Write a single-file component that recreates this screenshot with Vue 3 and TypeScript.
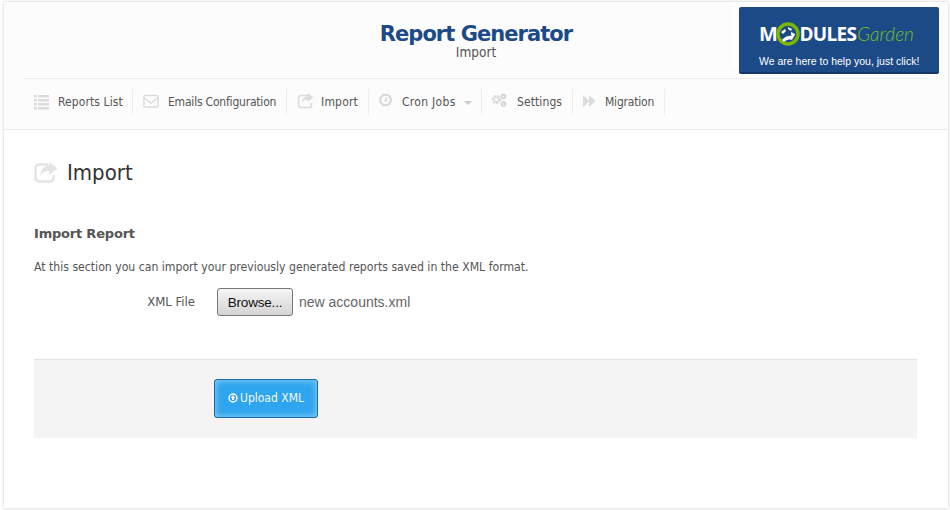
<script setup lang="ts">
const tabs = [
  { label: 'Reports List', icon: 'list', w: 109, gap: 6, ls: 0.1 },
  { label: 'Emails Configuration', icon: 'mail', w: 154, gap: 7, ls: -0.2 },
  { label: 'Import', icon: 'share', w: 82, gap: 6, ls: 0.2 },
  { label: 'Cron Jobs', icon: 'clock', w: 113, gap: 5, ls: 0.3, caret: true },
  { label: 'Settings', icon: 'cogs', w: 91, gap: 7, ls: 0.1 },
  { label: 'Migration', icon: 'forward', w: 92, gap: 4, ls: -0.2 },
]
</script>

<template>
  <div class="frame">
    <header class="head">
      <div class="titles">
        <h1>Report Generator</h1>
        <p>Import</p>
      </div>
      <a class="logo">
        <div class="brand">
          <span class="m">M</span>
          <svg class="ring" width="26" height="26" viewBox="0 0 26 26">
            <circle cx="13" cy="13" r="10" fill="#1c4a87" stroke="#7ab800" stroke-width="3.4" />
            <path d="M6 11l4-3 1 2-3 3zM13 6l4 2-1 2-3-2zM16 11l4 2-1 3-3-2zM7 19c3-4 7-5 12-4l-2 4c-3-1-6 0-8 2z" fill="#fff" />
          </svg>
          <span class="m dules">DULES</span>
          <span class="g">Garden</span>
        </div>
        <div class="tag">We are here to help you, just click!</div>
      </a>
      <nav class="nav">
        <a v-for="t in tabs" :key="t.label" class="tab" :style="{ width: t.w + 'px', letterSpacing: t.ls + 'px' }">
          <svg class="ico" width="18" height="18" viewBox="0 0 18 18">
            <g v-if="t.icon === 'list'" fill="#dcdcdc">
              <path d="M0 2h3v2.400H0zM0 6h3v2.400H0zM0 10h3v2.400H0zM0 14h3v2.400H0zM4 2h11v2.400H4zM4 6h11v2.400H4zM4 10h11v2.400H4zM4 14h11v2.400H4z" />
            </g>
            <g v-else-if="t.icon === 'mail'" fill="none" stroke="#dcdcdc" stroke-width="1.500">
              <rect x="1" y="2.500" width="14" height="11.500" rx="1" />
              <path d="M1.500 5l6.500 5 6.500-5" />
            </g>
            <g v-else-if="t.icon === 'share'">
              <path d="M11 2.500H4A2.500 2.500 0 0 0 1.500 5v7A2.500 2.500 0 0 0 4 14.500h8A2.500 2.500 0 0 0 14.500 12v-2" fill="none" stroke="#dcdcdc" stroke-width="1.700" />
              <path d="M10.500 0l6 4.500-6 4.500V6.500C8 6.500 6 7.500 5 10c0-4 2-6.500 5.500-6.800z" fill="#dcdcdc" />
            </g>
            <g v-else-if="t.icon === 'clock'">
              <circle cx="6.500" cy="7" r="5.300" fill="none" stroke="#d8d8d8" stroke-width="2.200" />
              <path d="M6.500 4h1.400v4.300H4.500V7h2z" fill="#d8d8d8" />
            </g>
            <g v-else-if="t.icon === 'cogs'" fill="none" stroke="#d8d8d8">
              <circle cx="4.500" cy="6.500" r="3" stroke-width="3" stroke-dasharray="2.200 .7" />
              <circle cx="11.500" cy="3.500" r="1.800" stroke-width="2.200" />
              <circle cx="11.500" cy="11" r="1.800" stroke-width="2.200" />
            </g>
            <path v-else d="M0 2l6 5.500V2l6.500 6-6.500 6V8.500L0 14z" fill="#dcdcdc" />
          </svg>
          <span class="lbl" :style="{ marginLeft: t.gap + 'px' }">{{ t.label }}</span>
          <i v-if="t.caret" class="caret"></i>
        </a>
      </nav>
    </header>

    <main class="body">
      <h2 class="page">
        <svg width="24" height="22" viewBox="0 0 24 22">
          <path d="M14 3.500H5A3.500 3.500 0 0 0 1.500 7v10A3.500 3.500 0 0 0 5 20.500h11a3.500 3.500 0 0 0 3.500-3.500v-3" fill="none" stroke="#e4e4e4" stroke-width="2.400" />
          <path d="M15 1l8.500 6.500L15 14v-4c-4 0-7 1.500-8.500 5 0-6 3-10 8.500-10.500z" fill="#e4e4e4" />
        </svg>
        <span>Import</span>
      </h2>
      <h3>Import Report</h3>
      <p class="desc">At this section you can import your previously generated reports saved in the XML format.</p>
      <div class="row">
        <label>XML File</label>
        <button class="browse" type="button">Browse...</button>
        <span class="file">new accounts.xml</span>
      </div>
      <div class="actions">
        <button class="upload" type="button">
          <svg width="10" height="10" viewBox="0 0 11 11">
            <circle cx="5.500" cy="5.500" r="4.300" fill="none" stroke="#fff" stroke-width="1.600" />
            <path d="M5.500 2.600L8 5.600H6.600V7.800H4.400V5.600H3z" fill="#fff" />
          </svg>
          Upload XML
        </button>
      </div>
    </main>
  </div>
</template>

<style scoped>
.frame {
  margin: 2px 2px 2px 4px;
  height: 506px;
  background: #fff;
  box-shadow: 0 0 3px rgba(0, 0, 0, 0.22);
  font-family: "DejaVu Sans", sans-serif;
  font-stretch: condensed;
  color: #555;
  overflow: hidden;
}
.head {
  position: relative;
  height: 128px;
  box-sizing: border-box;
  background: #fcfcfc;
  border-bottom: 1px solid #ececec;
  display: flex;
  flex-direction: column;
}
.titles {
  height: 76px;
  box-sizing: border-box;
  padding-top: 21px;
  text-align: center;
}
.titles h1 {
  margin: 0;
  font: bold 21px/22px "DejaVu Sans", sans-serif;
  font-stretch: normal;
  letter-spacing: -0.95px;
  color: #1c4a87;
}
.titles p {
  margin: 1px 0 0;
  font-size: 13.500px;
  line-height: 12px;
  color: #555;
}
.logo {
  position: absolute;
  left: 735px;
  top: 5px;
  width: 200px;
  height: 67px;
  box-sizing: border-box;
  background: #1c4a87;
  border-bottom: 2px solid #143763;
  border-radius: 2px;
  box-shadow: -7px -5px 0 #fff;
  color: #fff;
}
.brand {
  display: flex;
  align-items: center;
  height: 26px;
  margin: 14px 0 0 20px;
}
.m {
  font: bold 20px/26px "Open Sans", sans-serif;
  letter-spacing: -0.4px;
  color: #fff;
}
.dules {
  font-size: 19px;
  letter-spacing: -0.7px;
}
.ring {
  margin: 0 -2px 0 -2px;
  flex: none;
}
.g {
  margin-left: 1px;
  font: 300 italic 19px/26px "Lato", sans-serif;
  color: #74c01c;
}
.tag {
  margin: 8px 0 0 20px;
  font: 10.500px/13px "Liberation Sans", sans-serif;
  white-space: nowrap;
}
.nav {
  margin: 0 20px;
  height: 51px;
  border-top: 1px solid #ececec;
  display: flex;
  padding-top: 10px;
  box-sizing: border-box;
}
.tab {
  height: 26px;
  box-sizing: border-box;
  border-right: 1px solid #ececec;
  display: flex;
  align-items: center;
  font-size: 12px;
  color: #555;
  white-space: nowrap;
  padding-bottom: 1px;
}
.ico {
  margin-left: 10px;
  flex: none;
}
.caret {
  margin-left: 8px;
  margin-top: 2px;
  border-left: 4px solid transparent;
  border-right: 4px solid transparent;
  border-top: 4px solid #ccc;
}
.body {
  padding: 0 31px 0 30px;
}
.page {
  margin: 0;
  padding-top: 14px;
  height: 56px;
  display: flex;
  align-items: center;
  gap: 9px;
  font-size: 22px;
  font-weight: 400;
  color: #333;
  box-sizing: content-box;
}
.page svg {
  flex: none;
}
h3 {
  margin: 0;
  padding-top: 24px;
  font: bold 13px/20px "DejaVu Sans", sans-serif;
  letter-spacing: -0.2px;
  color: #555;
}
.desc {
  margin: 15px 0 0;
  font-size: 12.150px;
  line-height: 18px;
  position: relative;
  top: -1px;
}
.row {
  margin-top: 11px;
  display: flex;
  align-items: center;
  height: 28px;
}
.row label {
  width: 161px;
  text-align: right;
  font-size: 13px;
  margin-top: -2px;
}
.browse {
  margin-left: 22px;
  width: 76px;
  height: 28px;
  padding: 0;
  border: 1px solid #777;
  border-radius: 3px;
  background: linear-gradient(#f5f5f5, #d4d4d4);
  font: 13.500px "Liberation Sans", sans-serif;
  letter-spacing: -0.2px;
  color: #111;
}
.file {
  margin-left: 6px;
  font: 14px "Liberation Sans", sans-serif;
  color: #666;
}
.actions {
  margin-top: 43px;
  height: 79px;
  box-sizing: border-box;
  background: #f4f4f4;
  border-top: 1px solid #e3e3e3;
  padding: 19px 0 0 180px;
}
.upload {
  width: 104px;
  height: 39px;
  padding: 0 0 1px;
  border: 1px solid #1a6aa8;
  border-radius: 3px;
  background: #2ea5ee;
  box-shadow: inset 0 0 7px rgba(255, 255, 255, 0.55);
  color: #f2f9fe;
  font: 12px "DejaVu Sans", sans-serif;
  font-stretch: condensed;
  display: flex;
  align-items: center;
  justify-content: center;
  gap: 2px;
}
</style>

<style>
html, body { margin: 0; background: #fff; }
</style>
